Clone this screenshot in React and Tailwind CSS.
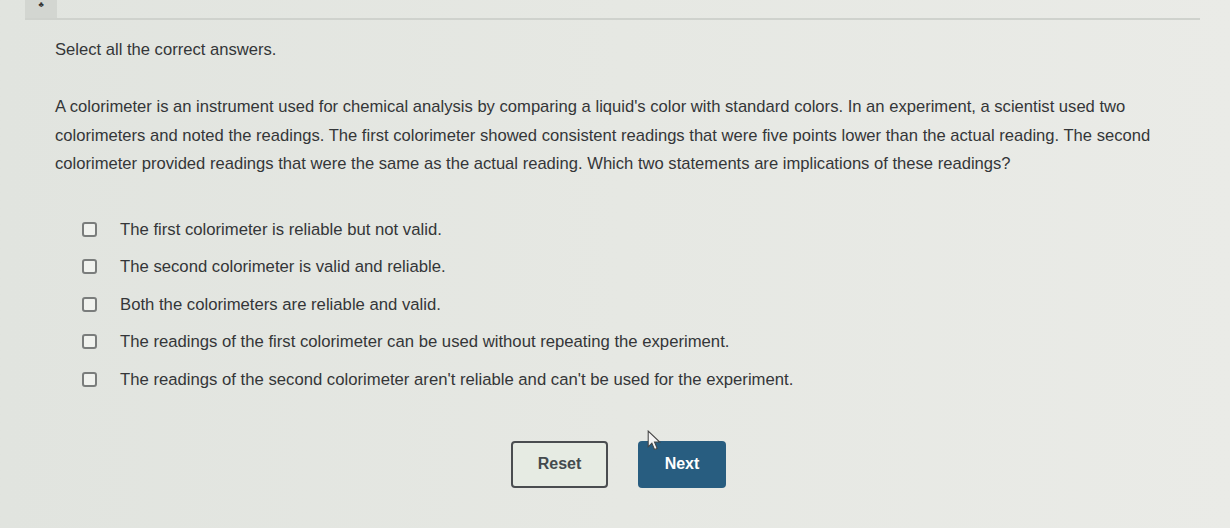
const QUESTION =
  "A colorimeter is an instrument used for chemical analysis by comparing a liquid's color with standard colors. In an experiment, a scientist used two colorimeters and noted the readings. The first colorimeter showed consistent readings that were five points lower than the actual reading. The second colorimeter provided readings that were the same as the actual reading. Which two statements are implications of these readings?";

const OPTIONS = [
  "The first colorimeter is reliable but not valid.",
  "The second colorimeter is valid and reliable.",
  "Both the colorimeters are reliable and valid.",
  "The readings of the first colorimeter can be used without repeating the experiment.",
  "The readings of the second colorimeter aren't reliable and can't be used for the experiment.",
];

function Cursor() {
  return (
    <svg className="absolute left-[9px] top-[-11px]" width="15" height="21" viewBox="0 0 14 20">
      <path d="M1 1 L1 16 L4.5 12.5 L7 18.5 L9.5 17.5 L7 11.5 L12 11.5 Z" fill="#f4f4f4" stroke="#444" strokeWidth="1" />
    </svg>
  );
}

export default function App() {
  return (
    <main
      className="w-[1230px] h-[528px] overflow-hidden bg-gradient-to-r from-[#e1e4df] via-[#e6e8e3] to-[#eaebe7] text-[#343638]"
      style={{ fontFamily: '"Liberation Sans", Arial, sans-serif' }}
    >
      <div className="flex h-[20px] border-b-2 border-[#cfd2cd] ml-[25px] mr-[30px]">
        <div className="w-[32px] h-full bg-[#d3d6d1] flex items-start justify-center pt-[1px]">
          <span className="text-[8px] leading-none text-[#333]">♣</span>
        </div>
      </div>

      <section className="pl-[55px] pr-[55px]">
        <p className="mt-[20px] text-[16.6px] leading-[19px]">Select all the correct answers.</p>
        <p className="mt-[34px] text-[16.6px] leading-[28.5px]">{QUESTION}</p>

        <ul className="mt-[41px] ml-[27px] flex flex-col gap-[18.5px]">
          {OPTIONS.map((opt) => (
            <li key={opt} className="flex items-center gap-[23px] text-[16.7px] leading-[19px]">
              <span className="w-[15px] h-[15px] shrink-0 rounded-[3px] border-2 border-[#7a7d7c] bg-[#f0f2ee]" />
              <span>{opt}</span>
            </li>
          ))}
        </ul>

        <div className="mt-[52px] ml-[456px] flex gap-[30px]">
          <button className="w-[97px] h-[47px] rounded-[4px] border-2 border-[#4a4d50] bg-[#e6ebe3] text-[16px] font-bold text-[#444a4e]">
            Reset
          </button>
          <button className="relative w-[88px] h-[47px] rounded-[4px] bg-[#285d80] text-[16px] font-bold text-white">
            <Cursor />
            Next
          </button>
        </div>
      </section>
    </main>
  );
}
